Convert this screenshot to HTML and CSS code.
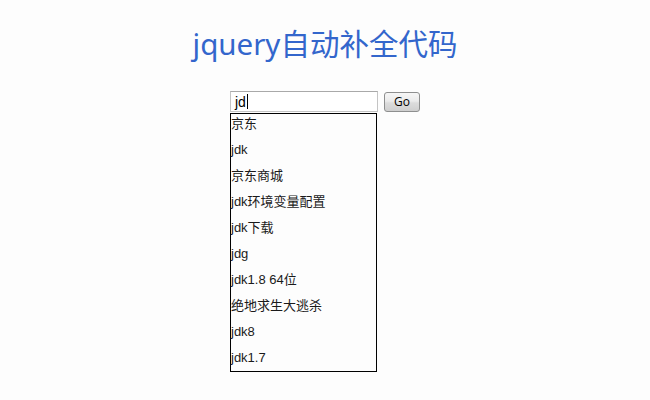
FILE: index.html
```html
<!DOCTYPE html>
<html lang="zh-CN">
<head>
<meta charset="utf-8">
<title>jquery自动补全代码</title>
<link rel="stylesheet" href="styles.css">
</head>
<body>
<h1 class="title">jquery自动补全代码</h1>
<div class="form">
  <div class="search">
    <div class="field"><span class="val">jd</span><span class="caret"></span></div>
    <ul class="suggest">
      <li>京东</li>
      <li>jdk</li>
      <li>京东商城</li>
      <li>jdk环境变量配置</li>
      <li>jdk下载</li>
      <li>jdg</li>
      <li>jdk1.8 64位</li>
      <li>绝地求生大逃杀</li>
      <li>jdk8</li>
      <li>jdk1.7</li>
    </ul>
  </div>
  <button class="go" type="button">Go</button>
</div>
</body>
</html>
```

FILE: styles.css
```css
html, body {
  margin: 0;
  padding: 0;
  background: #fdfdfd;
}
body {
  font-family: "Liberation Sans", "Noto Sans CJK SC", sans-serif;
  color: #111;
}
.title {
  margin: 24px 0 0;
  font-family: "Noto Sans", "Noto Sans CJK SC", sans-serif;
  font-weight: normal;
  font-size: 29.5px;
  line-height: 40px;
  color: #3366cc;
  text-align: center;
}
.form {
  display: flex;
  justify-content: center;
  align-items: flex-start;
  gap: 6px;
  margin-top: 27px;
}
.search {
  display: flex;
  flex-direction: column;
  align-items: flex-start;
  gap: 1px;
  width: 148px;
}
.field {
  box-sizing: border-box;
  width: 148px;
  height: 21px;
  border: 1px solid #c4c4c4;
  border-top-color: #a9a9a9;
  background: #fff;
  padding: 0 4px;
  display: flex;
  align-items: center;
  font-size: 14px;
  color: #000;
}
.caret {
  display: inline-block;
  width: 1px;
  height: 15px;
  background: #000;
  margin-left: 1px;
}
.suggest {
  box-sizing: border-box;
  width: 147px;
  margin: 0;
  padding: 0;
  list-style: none;
  border: 1px solid #000;
  background: #fdfdfd;
}
.suggest li {
  font-size: 13px;
  line-height: 26px;
  height: 26px;
  padding: 0;
  color: #1a1a1a;
  white-space: nowrap;
}
.suggest li:first-child {
  margin-top: -3px;
}
.go {
  box-sizing: border-box;
  margin-top: 1px;
  width: 36px;
  height: 20px;
  padding: 0;
  border: 1px solid #8e8f8f;
  border-radius: 3px;
  background: linear-gradient(#f6f6f6 0%, #ebebeb 45%, #dcdcdc 55%, #cfcfcf 100%);
  font-family: "Open Sans", "Liberation Sans", sans-serif;
  font-size: 12px;
  line-height: 18px;
  color: #000;
}
```
